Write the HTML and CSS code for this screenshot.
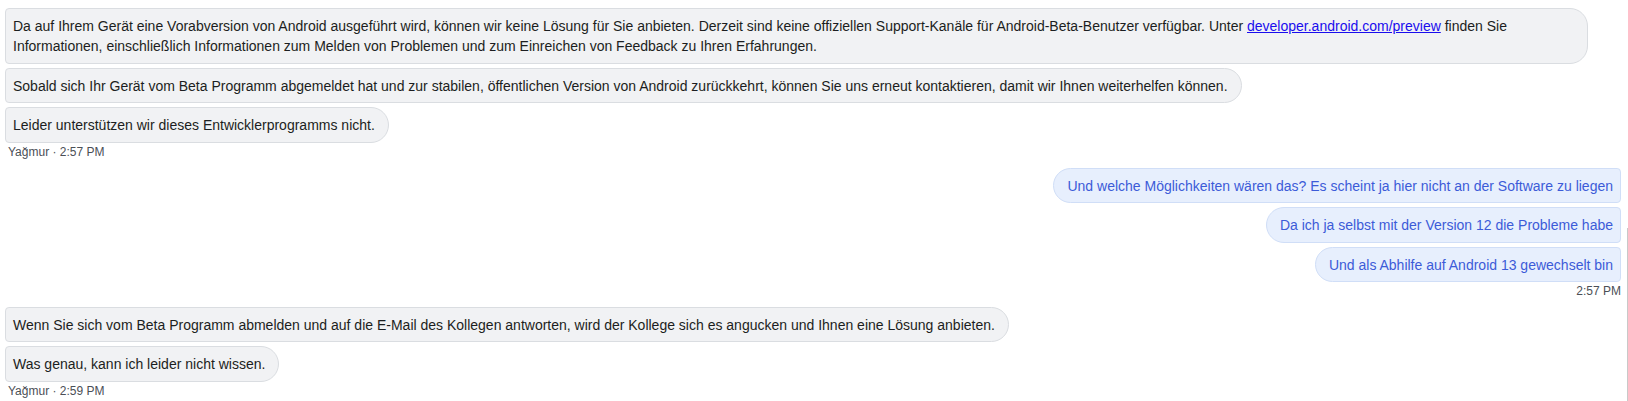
FILE: index.html
```html
<!DOCTYPE html>
<html lang="de">
<head>
<meta charset="utf-8">
<title>Chat</title>
<link rel="stylesheet" href="styles.css">
</head>
<body>
<div class="thread">
  <div class="group incoming">
    <div class="bubble">Da auf Ihrem Gerät eine Vorabversion von Android ausgeführt wird, können wir keine Lösung für Sie anbieten. Derzeit sind keine offiziellen Support-Kanäle für Android-Beta-Benutzer verfügbar. Unter <a class="link" href="#">developer.android.com/preview</a> finden Sie Informationen, einschließlich Informationen zum Melden von Problemen und zum Einreichen von Feedback zu Ihren Erfahrungen.</div>
    <div class="bubble">Sobald sich Ihr Gerät vom Beta Programm abgemeldet hat und zur stabilen, öffentlichen Version von Android zurückkehrt, können Sie uns erneut kontaktieren, damit wir Ihnen weiterhelfen können.</div>
    <div class="bubble">Leider unterstützen wir dieses Entwicklerprogramms nicht.</div>
    <div class="meta">Yağmur · 2:57 PM</div>
  </div>
  <div class="group outgoing">
    <div class="bubble">Und welche Möglichkeiten wären das? Es scheint ja hier nicht an der Software zu liegen</div>
    <div class="bubble">Da ich ja selbst mit der Version 12 die Probleme habe</div>
    <div class="bubble">Und als Abhilfe auf Android 13 gewechselt bin</div>
    <div class="meta">2:57 PM</div>
  </div>
  <div class="group incoming">
    <div class="bubble">Wenn Sie sich vom Beta Programm abmelden und auf die E-Mail des Kollegen antworten, wird der Kollege sich es angucken und Ihnen eine Lösung anbieten.</div>
    <div class="bubble">Was genau, kann ich leider nicht wissen.</div>
    <div class="meta">Yağmur · 2:59 PM</div>
  </div>
  <div class="scroll-edge"></div>
</div>
</body>
</html>
```
FILE: styles.css
```css
* { box-sizing: border-box; }
html, body {
  margin: 0;
  padding: 0;
  background: #ffffff;
}
body {
  font-family: "Liberation Sans", Arial, sans-serif;
  font-size: 14px;
  color: #1c1e21;
}
.thread {
  position: relative;
  height: 401px;
  padding: 8px 7px 0 5px;
  overflow: hidden;
  display: flex;
  flex-direction: column;
}
.group {
  display: flex;
  flex-direction: column;
  gap: 4px;
}
.group + .group {
  margin-top: 8px;
}
.incoming { align-items: flex-start; }
.outgoing { align-items: flex-end; }
.bubble {
  line-height: 20px;
  padding: 7px 13px 6.5px 7px;
  border: 1px solid #dadde1;
  background: #f1f2f4;
  border-radius: 4px 18px 18px 4px;
  max-width: calc(100% - 33px);
}
.outgoing .bubble {
  padding: 7px 7px 6.5px 13px;
  border-color: #d0def7;
  background: #e7effd;
  color: #3c5bd8;
  border-radius: 18px 4px 4px 18px;
  text-align: right;
}
.link {
  color: #1a0dee;
  text-decoration: underline;
}
.meta {
  font-size: 12px;
  line-height: 16px;
  color: #4b4f56;
  padding-left: 3px;
  margin-top: -3px;
}
.outgoing .meta {
  padding-left: 0;
  margin-top: -3.5px;
}
.scroll-edge {
  position: absolute;
  right: 0;
  top: 228px;
  bottom: 0;
  width: 1px;
  background: #c9c9c9;
}
```
